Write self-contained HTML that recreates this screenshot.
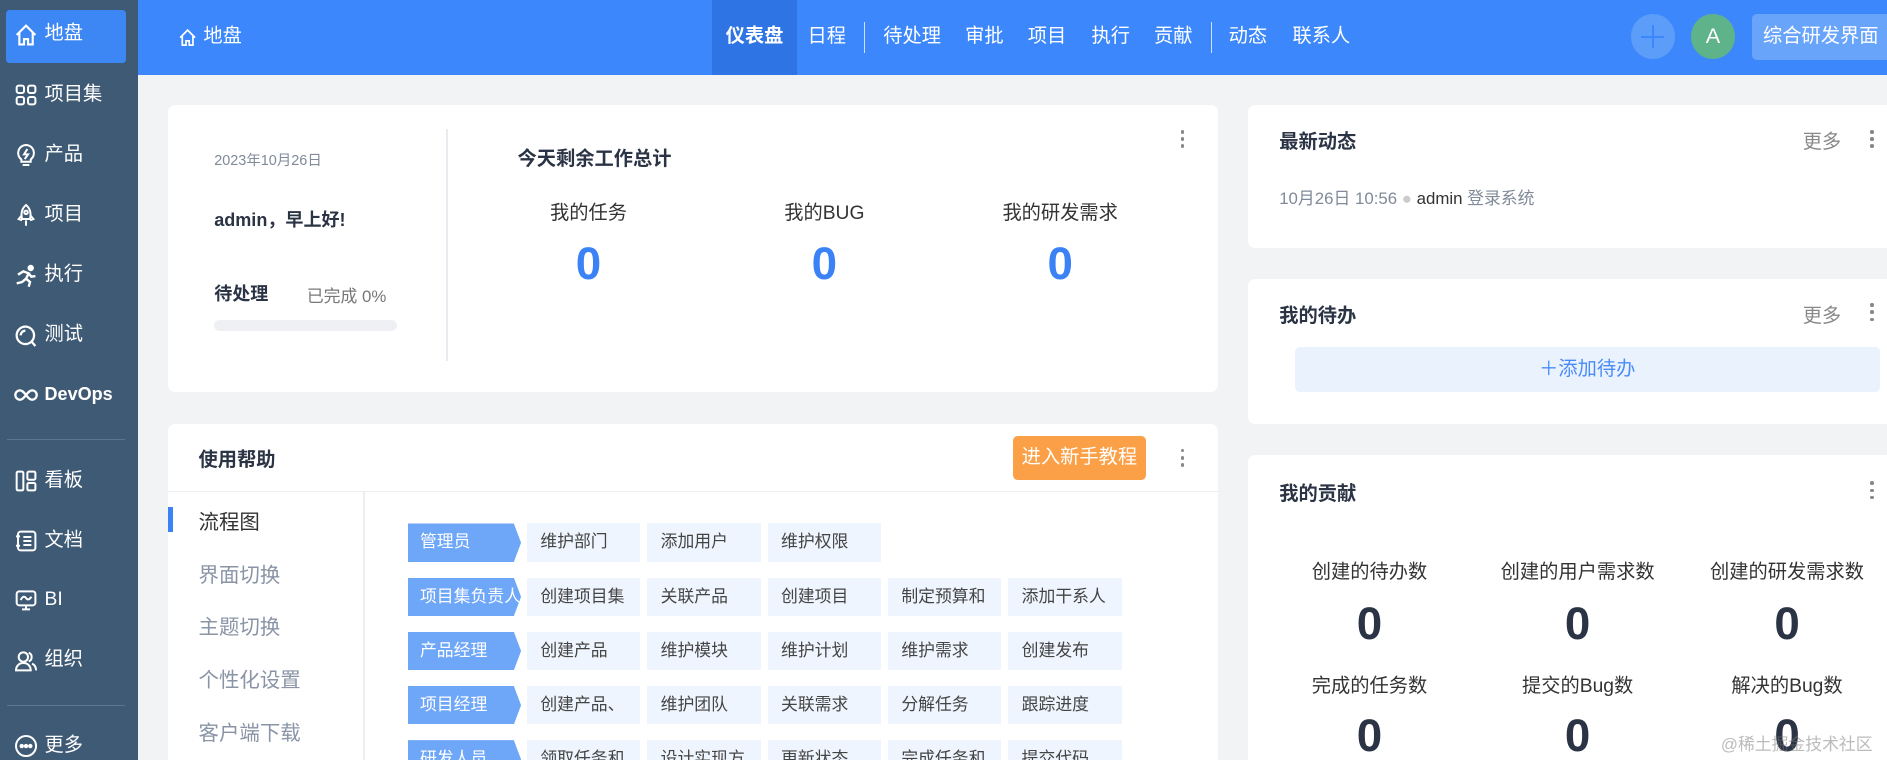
<!DOCTYPE html>
<html><head><meta charset="utf-8"><style>
*{margin:0;padding:0;box-sizing:border-box}
html,body{width:1887px;height:760px;overflow:hidden;background:#f1f3f5}
#r{position:relative;width:1568px;height:632px;zoom:1.2034;font-family:"Liberation Sans","Noto Sans CJK SC",sans-serif;color:#2b3445;overflow:hidden;background:#f1f3f5}
.a{position:absolute;white-space:nowrap}
.sb{position:absolute;left:0;top:0;width:115px;height:632px;background:#3f5a74}
.si{position:absolute;left:12px;height:24px;line-height:24px;color:#fff;font-size:16px;display:flex;align-items:center;gap:5px}
.si svg{width:20px;height:20px}
.hd{position:absolute;left:115px;top:0;width:1453px;height:62px;background:#3b87fb}
.nv{position:absolute;top:0;height:62px;line-height:62px;color:#fff;font-size:16px}
.card{position:absolute;background:#fff;border-radius:6px}
.keb{position:absolute;width:4px}
.keb i{display:block;width:3px;height:3px;border-radius:50%;background:#888;margin-bottom:3px}
.lab{position:absolute;width:94px;height:32px;line-height:32px;padding-left:10px;font-size:14px;color:#fff;background:#6ea6f8;clip-path:polygon(0 0,88px 0,94px 50%,88px 100%,0 100%);overflow:hidden}
.cel{position:absolute;width:94px;height:32px;line-height:32px;padding-left:11px;font-size:14px;color:#444;background:#eff5fe;overflow:hidden}
.st{position:absolute;width:170px;text-align:center;font-size:16px;color:#333}
.num{position:absolute;width:170px;text-align:center;font-size:38px;font-weight:bold;font-family:"Liberation Sans",sans-serif}
</style></head><body><div id="r">
<div class="sb">
 <div class="a" style="left:5px;top:8px;width:100px;height:44px;background:#3d87f5;border-radius:3px"></div>
 <div class="si" style="top:17px"><svg viewBox="0 0 18 18" fill="none" stroke="#fff" stroke-width="1.6"><path d="M2 9L9 2l7 7M4 7.5V16h3.5v-4h3v4H14V7.5"/></svg>地盘</div>
 <div class="si" style="top:67px"><svg viewBox="0 0 18 18" fill="none" stroke="#fff" stroke-width="1.5"><rect x="2" y="2" width="5.5" height="5.5" rx="1.5"/><rect x="10.5" y="2" width="5.5" height="5.5" rx="1.5"/><rect x="2" y="10.5" width="5.5" height="5.5" rx="1.5"/><rect x="10.5" y="10.5" width="5.5" height="5.5" rx="1.5"/></svg>项目集</div>
 <div class="si" style="top:117px"><svg viewBox="0 0 18 18" fill="none" stroke="#fff" stroke-width="1.5"><path d="M9 1.5a6 6 0 0 0-3.5 10.8V14h7v-1.7A6 6 0 0 0 9 1.5zM6.5 16.5h5M10 4.5L7.5 8.5h3L8 12"/></svg>产品</div>
 <div class="si" style="top:167px"><svg viewBox="0 0 18 18" fill="none" stroke="#fff" stroke-width="1.5"><path d="M9 1.5c3 2.5 4 6 3 10.5H6C5 7.5 6 4 9 1.5zM6 9l-2.5 3 2.5 1M12 9l2.5 3-2.5 1M9 13v4"/><circle cx="9" cy="7" r="1.3"/></svg>项目</div>
 <div class="si" style="top:217px"><svg viewBox="0 0 18 18" fill="none" stroke="#fff" stroke-width="1.8"><circle cx="12.5" cy="3" r="1.5" fill="#fff"/><path d="M3 8l4-2.5 4 1.5-2 4 3 2.5-1 3.5M9 11l-3 2.5-4 1M11 7l2 2.5 3-.5"/></svg>执行</div>
 <div class="si" style="top:267px"><svg viewBox="0 0 18 18" fill="none" stroke="#fff" stroke-width="1.7"><circle cx="8.5" cy="8.5" r="6.5"/><path d="M13 13l3 3.5M5 8.5a3.5 3.5 0 0 1 3.5-3.5"/></svg>测试</div>
 <div class="si" style="top:316px;font-weight:bold;font-size:15px"><svg viewBox="0 0 18 18" fill="none" stroke="#fff" stroke-width="1.7"><path d="M9 9c-2-2.5-3-3.5-4.5-3.5a3.5 3.5 0 0 0 0 7C6 12.5 7 11.5 9 9s3-3.5 4.5-3.5a3.5 3.5 0 0 1 0 7C12 12.5 11 11.5 9 9z"/></svg>DevOps</div>
 <div class="a" style="left:6px;top:365px;height:1px;background:#5d7690;width:98px"></div>
 <div class="si" style="top:388px"><svg viewBox="0 0 18 18" fill="none" stroke="#fff" stroke-width="1.5"><rect x="2" y="2" width="5" height="14" rx="1"/><rect x="10" y="2" width="6" height="6" rx="1"/><rect x="10" y="10.5" width="6" height="5.5" rx="1"/></svg>看板</div>
 <div class="si" style="top:438px"><svg viewBox="0 0 18 18" fill="none" stroke="#fff" stroke-width="1.5"><rect x="3" y="2" width="13" height="14" rx="2"/><path d="M7 6h6M7 9h6M7 12h6M1.5 5.5h3M1.5 12.5h3"/></svg>文档</div>
 <div class="si" style="top:487px"><svg viewBox="0 0 18 18" fill="none" stroke="#fff" stroke-width="1.5"><rect x="2" y="2.5" width="14" height="10.5" rx="2"/><path d="M5 9c1.5-3 3-3 4-1.5s2.5 1.5 4-1M9 13v3M6 16h6"/></svg>BI</div>
 <div class="si" style="top:537px"><svg viewBox="0 0 18 18" fill="none" stroke="#fff" stroke-width="1.5"><circle cx="7" cy="6" r="3.5"/><path d="M1.5 16c0-3.5 2.5-5.5 5.5-5.5s5.5 2 5.5 5.5zM11 2.8a3.5 3.5 0 0 1 0 6.5M13.5 11c2 .8 3 2.5 3 5"/></svg>组织</div>
 <div class="a" style="left:6px;top:586px;height:1px;background:#5d7690;width:98px"></div>
 <div class="si" style="top:608px"><svg viewBox="0 0 18 18" fill="none" stroke="#fff" stroke-width="1.5"><circle cx="9" cy="9" r="7.5"/><circle cx="5.8" cy="9" r=".9" fill="#fff"/><circle cx="9" cy="9" r=".9" fill="#fff"/><circle cx="12.2" cy="9" r=".9" fill="#fff"/></svg>更多</div>
</div>
<div class="hd"></div>
<div class="nv" style="left:148px;display:flex;align-items:center;gap:5px"><svg width="16" height="16" viewBox="0 0 18 18" fill="none" stroke="#fff" stroke-width="1.6"><path d="M2 9L9 2l7 7M4 7.5V16h3.5v-4h3v4H14V7.5"/></svg>地盘</div>
<div class="a" style="left:592px;top:0;width:70px;height:62px;background:#2f74e4"></div>
<div class="nv" style="left:603px;font-weight:bold">仪表盘</div>
<div class="nv" style="left:671px">日程</div>
<div class="a" style="left:718px;top:18px;width:1px;height:26px;background:#cfe0fd"></div>
<div class="nv" style="left:734px">待处理</div>
<div class="nv" style="left:802px">审批</div>
<div class="nv" style="left:854px">项目</div>
<div class="nv" style="left:907px">执行</div>
<div class="nv" style="left:959px">贡献</div>
<div class="a" style="left:1006px;top:18px;width:1px;height:26px;background:#cfe0fd"></div>
<div class="nv" style="left:1021px">动态</div>
<div class="nv" style="left:1074px">联系人</div>
<div class="a" style="left:1355px;top:12px;width:37px;height:37px;border-radius:50%;background:#5b9df9"></div>
<div class="a" style="left:1364px;top:29.5px;width:19px;height:2px;background:#3b87fb"></div>
<div class="a" style="left:1372.5px;top:21px;width:2px;height:19px;background:#3b87fb"></div>
<div class="a" style="left:1405px;top:12px;width:37px;height:37px;border-radius:50%;background:#5fb38b;color:#fff;font-size:18px;line-height:37px;text-align:center">A</div>
<div class="a" style="left:1456px;top:12px;width:120px;height:38px;border-radius:4px;background:#69a4fb;color:#fff;font-size:16px;line-height:38px;padding-left:9px">综合研发界面</div>

<div class="card" style="left:140px;top:87px;width:872px;height:239px"></div>
<div class="a" style="left:178px;top:124px;font-size:12px;color:#808a99">2023年10月26日</div>
<div class="a" style="left:178px;top:171px;font-size:15px;font-weight:bold">admin，早上好!</div>
<div class="a" style="left:178px;top:233px;font-size:15px;font-weight:bold">待处理</div>
<div class="a" style="left:255px;top:234px;font-size:14px;color:#777">已完成 0%</div>
<div class="a" style="left:178px;top:266px;width:152px;height:9px;border-radius:5px;background:#eef0f3"></div>
<div class="a" style="left:371px;top:107px;width:1px;height:193px;background:#e8ebef"></div>
<div class="a" style="left:430px;top:119px;font-size:16px;font-weight:bold">今天剩余工作总计</div>
<div class="keb" style="left:981px;top:108px"><i></i><i></i><i></i></div>
<div class="st" style="left:404px;top:164px">我的任务</div><div class="num" style="left:404px;top:198px;color:#3b82f6">0</div>
<div class="st" style="left:600px;top:164px">我的BUG</div><div class="num" style="left:600px;top:198px;color:#3b82f6">0</div>
<div class="st" style="left:796px;top:164px">我的研发需求</div><div class="num" style="left:796px;top:198px;color:#3b82f6">0</div>

<div class="card" style="left:140px;top:352px;width:872px;height:300px"></div>
<div class="a" style="left:165px;top:369px;font-size:16px;font-weight:bold">使用帮助</div>
<div class="a" style="left:842px;top:362px;width:110px;height:37px;border-radius:4px;background:#fba046;color:#fff;font-size:16px;line-height:37px;text-align:center">进入新手教程</div>
<div class="keb" style="left:981px;top:373px"><i></i><i></i><i></i></div>
<div class="a" style="left:140px;top:408px;width:872px;height:1px;background:#eceef1"></div>
<div class="a" style="left:302px;top:409px;width:1px;height:230px;background:#eceef1"></div>
<div class="a" style="left:140px;top:421px;width:4px;height:21px;background:#3b82f6"></div>
<div class="a" style="left:165px;top:420px;font-size:17px;color:#333">流程图</div>
<div class="a" style="left:165px;top:464px;font-size:17px;color:#8a94a6">界面切换</div>
<div class="a" style="left:165px;top:507px;font-size:17px;color:#8a94a6">主题切换</div>
<div class="a" style="left:165px;top:551px;font-size:17px;color:#8a94a6">个性化设置</div>
<div class="a" style="left:165px;top:595px;font-size:17px;color:#8a94a6">客户端下载</div>

<div class="lab" style="left:339px;top:435px">管理员</div>
<div class="cel" style="left:438px;top:435px">维护部门</div><div class="cel" style="left:538px;top:435px">添加用户</div><div class="cel" style="left:638px;top:435px">维护权限</div>
<div class="lab" style="left:339px;top:480px">项目集负责人</div>
<div class="cel" style="left:438px;top:480px">创建项目集</div><div class="cel" style="left:538px;top:480px">关联产品</div><div class="cel" style="left:638px;top:480px">创建项目</div><div class="cel" style="left:738px;top:480px">制定预算和规划</div><div class="cel" style="left:838px;top:480px">添加干系人</div>
<div class="lab" style="left:339px;top:525px">产品经理</div>
<div class="cel" style="left:438px;top:525px">创建产品</div><div class="cel" style="left:538px;top:525px">维护模块</div><div class="cel" style="left:638px;top:525px">维护计划</div><div class="cel" style="left:738px;top:525px">维护需求</div><div class="cel" style="left:838px;top:525px">创建发布</div>
<div class="lab" style="left:339px;top:570px">项目经理</div>
<div class="cel" style="left:438px;top:570px">创建产品、执行</div><div class="cel" style="left:538px;top:570px">维护团队</div><div class="cel" style="left:638px;top:570px">关联需求</div><div class="cel" style="left:738px;top:570px">分解任务</div><div class="cel" style="left:838px;top:570px">跟踪进度</div>
<div class="lab" style="left:339px;top:615px">研发人员</div>
<div class="cel" style="left:438px;top:615px">领取任务和Bug</div><div class="cel" style="left:538px;top:615px">设计实现方案</div><div class="cel" style="left:638px;top:615px">更新状态</div><div class="cel" style="left:738px;top:615px">完成任务和Bug</div><div class="cel" style="left:838px;top:615px">提交代码</div>

<div class="card" style="left:1037px;top:87px;width:540px;height:119px"></div>
<div class="a" style="left:1063px;top:105px;font-size:16px;font-weight:bold">最新动态</div>
<div class="a" style="left:1498px;top:105px;font-size:16px;color:#888">更多</div>
<div class="keb" style="left:1554px;top:108px"><i></i><i></i><i></i></div>
<div class="a" style="left:1063px;top:153px;font-size:14px;color:#808a99">10月26日 10:56 <span style="color:#ccc">●</span> <span style="color:#333">admin</span> 登录系统</div>

<div class="card" style="left:1037px;top:232px;width:540px;height:120px"></div>
<div class="a" style="left:1063px;top:249px;font-size:16px;font-weight:bold">我的待办</div>
<div class="a" style="left:1498px;top:249px;font-size:16px;color:#888">更多</div>
<div class="keb" style="left:1554px;top:252px"><i></i><i></i><i></i></div>
<div class="a" style="left:1076px;top:288px;width:486px;height:38px;border-radius:4px;background:#eaf2fe;color:#4a8cf6;font-size:16px;line-height:38px;text-align:center">＋添加待办</div>

<div class="card" style="left:1037px;top:378px;width:540px;height:280px"></div>
<div class="a" style="left:1063px;top:397px;font-size:16px;font-weight:bold">我的贡献</div>
<div class="keb" style="left:1554px;top:400px"><i></i><i></i><i></i></div>
<div class="st" style="left:1053px;top:462px">创建的待办数</div><div class="num" style="left:1053px;top:497px">0</div>
<div class="st" style="left:1226px;top:462px">创建的用户需求数</div><div class="num" style="left:1226px;top:497px">0</div>
<div class="st" style="left:1400px;top:462px">创建的研发需求数</div><div class="num" style="left:1400px;top:497px">0</div>
<div class="st" style="left:1053px;top:557px">完成的任务数</div><div class="num" style="left:1053px;top:590px">0</div>
<div class="st" style="left:1226px;top:557px">提交的Bug数</div><div class="num" style="left:1226px;top:590px">0</div>
<div class="st" style="left:1400px;top:557px">解决的Bug数</div><div class="num" style="left:1400px;top:590px">0</div>
<div class="a" style="left:1430px;top:607px;font-size:14px;color:rgba(120,120,120,.5)">@稀土掘金技术社区</div>
</div></body></html>
